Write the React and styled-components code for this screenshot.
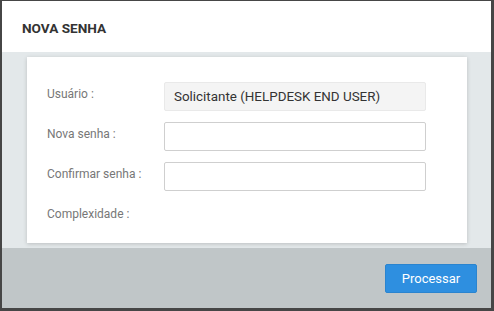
import React from "react";
import styled, { createGlobalStyle } from "styled-components";

const GlobalStyle = createGlobalStyle`
  html, body {
    margin: 0;
    padding: 0;
    background: #444;
  }
  * {
    box-sizing: border-box;
  }
`;

function App() {
  return (
    <>
      <GlobalStyle />
      <Frame>
        <Header>
          <h1>NOVA SENHA</h1>
        </Header>
        <Body>
          <Card>
            <Row>
              <Label>Usuário :</Label>
              <ReadOnly>Solicitante (HELPDESK END USER)</ReadOnly>
            </Row>
            <Row>
              <Label>Nova senha :</Label>
              <Field type="password" />
            </Row>
            <Row>
              <Label>Confirmar senha :</Label>
              <Field type="password" />
            </Row>
            <Row short>
              <Label>Complexidade :</Label>
            </Row>
          </Card>
        </Body>
        <Footer>
          <Button>Processar</Button>
        </Footer>
      </Frame>
    </>
  );
}

export default App;

const Frame = styled.div`
  width: 494px;
  height: 311px;
  display: flex;
  flex-direction: column;
  border-style: solid;
  border-color: #464646;
  border-width: 1px 3px 3px 2px;
  font-family: Roboto, "Liberation Sans", sans-serif;
  background: #fff;
`;

const Header = styled.div`
  height: 51px;
  display: flex;
  align-items: center;
  padding-left: 20px;
  background: #fff;

  > h1 {
    margin: 0;
    padding-top: 2px;
    font-size: 13.6px;
    font-weight: 700;
    color: #333;
  }
`;

const Body = styled.div`
  height: 196px;
  padding: 5px 24px 5px 25px;
  background: #e3e8ea;
`;

const Card = styled.div`
  height: 100%;
  background: #fff;
  padding: 25px 41px 0 20px;
  display: flex;
  flex-direction: column;
  gap: 11px;
  box-shadow: 0 1px 4px rgba(0, 0, 0, 0.18);
`;

const Row = styled.div`
  display: flex;
  align-items: flex-start;
  height: ${(p) => (p.short ? "20px" : "29px")};
`;

const Label = styled.div`
  width: 117px;
  flex-shrink: 0;
  padding-top: 5px;
  font-size: 12px;
  color: #777;
`;

const ReadOnly = styled.div`
  flex: 1;
  height: 29px;
  display: flex;
  align-items: center;
  padding-left: 9px;
  font-size: 13.4px;
  color: #333;
  background: #f4f4f4;
  border: 1px solid #e9e9e9;
  border-radius: 2px;
`;

const Field = styled.input`
  flex: 1;
  height: 29px;
  margin: 0;
  padding: 0 9px;
  font-size: 13px;
  background: #fff;
  border: 1px solid #cfcfcf;
  border-radius: 2px;
  outline: none;
`;

const Footer = styled.div`
  flex: 1;
  display: flex;
  justify-content: flex-end;
  align-items: flex-start;
  padding: 16px 14px 0 0;
  background: #c0c6c8;
`;

const Button = styled.button`
  width: 92px;
  height: 29px;
  font-family: Roboto, "Liberation Sans", sans-serif;
  font-size: 13px;
  color: #fff;
  background: #2e8fe0;
  border: 1px solid #2a84cf;
  border-radius: 2px;
  cursor: pointer;
`;
